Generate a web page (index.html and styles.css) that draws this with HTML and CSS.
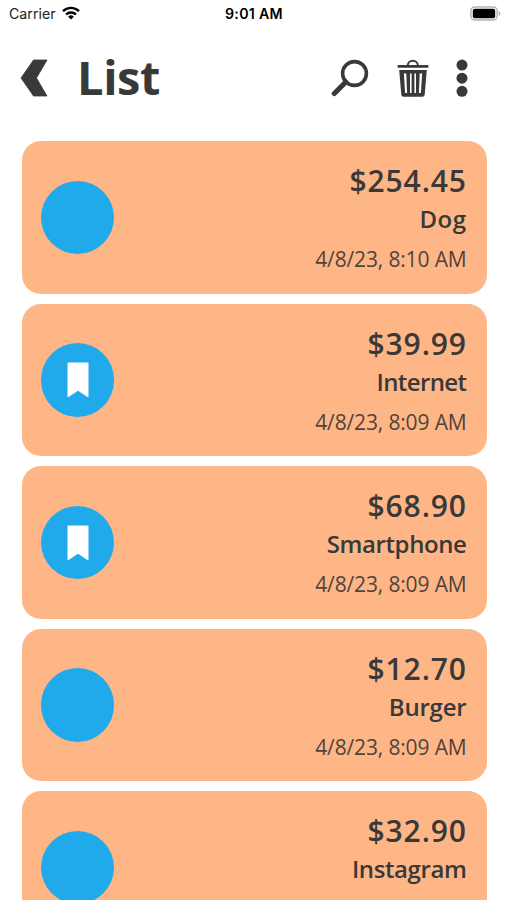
FILE: index.html
```
<!DOCTYPE html>
<html lang="en">
<head>
<meta charset="utf-8">
<meta name="viewport" content="width=device-width, initial-scale=1">
<title>List</title>
<link rel="stylesheet" href="styles.css">
</head>
<body>
<div class="status">
  <div class="carrier"><span>Carrier</span>
    <svg class="wifi" viewBox="0 0 18 14"><g fill="none" stroke="#000" stroke-width="2.4"><path d="M1 5.1a11.6 11.6 0 0 1 16 0"/><path d="M4 8.5a7.2 7.2 0 0 1 10 0"/></g><path d="M9 13.6 6.1 10.7a4.1 4.1 0 0 1 5.8 0z"/></svg>
  </div>
  <time class="clock">9:01 AM</time>
  <svg class="battery" viewBox="0 0 31 15"><rect x=".9" y=".9" width="26.2" height="13.2" rx="4" fill="#fff" stroke="#b5b5b5" stroke-width="1.5"/><rect x="2.8" y="2.8" width="22.4" height="9.4" rx="2"/><path d="M28.7 5.2c2.2.7 2.2 3.9 0 4.6z" fill="#aaa"/></svg>
</div>
<header class="bar">
  <svg class="back" viewBox="0 0 28 38"><path d="M13.5 1H27L16.5 19 27 37H13.5L1 19z" stroke="#393939" stroke-width=".8" stroke-linejoin="round"/></svg>
  <h1 class="title">List</h1>
  <svg class="search" viewBox="0 0 38 38"><circle cx="23.5" cy="14.5" r="11.9" fill="none" stroke="#393939" stroke-width="3.6"/><path d="M14.8 23 3.3 34.5" stroke="#393939" stroke-width="5.2" stroke-linecap="round"/></svg>
  <svg class="trash" viewBox="0 0 32 38"><path d="M10.7 6.8a5.1 5.1 0 0 1 10.2 0" fill="none" stroke="#393939" stroke-width="2"/><rect x=".5" y="6" width="31" height="2.8" rx="1"/><path fill-rule="evenodd" d="M2.2 11H29.8L27.7 35.7Q27.5 37.7 25.5 37.7H6.5Q4.5 37.7 4.3 35.7zM6.9 14.5 8.1 34h2L9.3 14.5zM13 14.5V34h1.6V14.5zM17.4 14.5V34H19V14.5zM22.7 14.5 21.9 34h2L25.1 14.5z"/></svg>
  <svg class="more" viewBox="0 0 12 38"><circle cx="6" cy="6.1" r="5.5"/><circle cx="6" cy="19.2" r="5.5"/><circle cx="6" cy="32.3" r="5.5"/></svg>
</header>
<main class="list">
  <article class="card">
    <div class="avatar"></div>
    <div class="info"><div class="price">$254.45</div><div class="name dog">Dog</div><time class="date">4/8/23, 8:10 AM</time></div>
  </article>
  <article class="card">
    <div class="avatar"><svg class="mark" viewBox="0 0 22 36"><path d="M1.5.5h19a1 1 0 0 1 1 1v33a.7.7 0 0 1-1 .5L11 28.8 1.5 35a.7.7 0 0 1-1-.5v-33a1 1 0 0 1 1-1z"/></svg></div>
    <div class="info"><div class="price">$39.99</div><div class="name internet">Internet</div><time class="date">4/8/23, 8:09 AM</time></div>
  </article>
  <article class="card">
    <div class="avatar"><svg class="mark" viewBox="0 0 22 36"><path d="M1.5.5h19a1 1 0 0 1 1 1v33a.7.7 0 0 1-1 .5L11 28.8 1.5 35a.7.7 0 0 1-1-.5v-33a1 1 0 0 1 1-1z"/></svg></div>
    <div class="info"><div class="price">$68.90</div><div class="name">Smartphone</div><time class="date">4/8/23, 8:09 AM</time></div>
  </article>
  <article class="card">
    <div class="avatar"></div>
    <div class="info"><div class="price">$12.70</div><div class="name burger">Burger</div><time class="date">4/8/23, 8:09 AM</time></div>
  </article>
  <article class="card">
    <div class="avatar"></div>
    <div class="info"><div class="price">$32.90</div><div class="name">Instagram</div></div>
  </article>
</main>
</body>
</html>
```
FILE: styles.css
```
* { box-sizing: border-box; }
html, body { height: 100%; }
body {
  margin: 0;
  overflow: hidden;
  background: #fff;
  color: #393939;
  font-family: "Open Sans", "Noto Sans", sans-serif;
}
svg { display: block; flex: none; fill: #393939; }
.status {
  display: grid;
  grid-template-columns: 1fr auto 1fr;
  align-items: center;
  height: 27px;
  padding: 0 6px 0 7px;
  font: 400 14.2px/27px Inter, sans-serif;
  color: #222;
}
.carrier { display: flex; align-items: center; gap: 6px; padding-left: 2px; }
.wifi { width: 18px; height: 14px; fill: #000; margin-top: -1px; }
.clock { font-weight: 600; color: #000; letter-spacing: .3px; }
.battery { width: 31px; height: 15px; justify-self: end; fill: #000; }
.bar {
  display: flex;
  align-items: center;
  height: 102px;
  padding-left: 20px;
}
.back { width: 28px; height: 38px; }
.title {
  flex: 1;
  margin: -3px 0 0 29px;
  font-size: 47px;
  line-height: 60px;
  font-weight: 700;
  letter-spacing: -.4px;
}
.search { width: 38px; height: 38px; }
.trash { width: 32px; height: 38px; margin-left: 28px; }
.more { width: 12px; height: 38px; margin: 0 39px 0 27.5px; }
.list {
  display: flex;
  flex-direction: column;
  gap: 10px;
  padding: 12px 20.5px 0 21.5px;
}
.card {
  display: flex;
  flex: none;
  justify-content: space-between;
  align-items: flex-start;
  height: 152.5px;
  padding: 0 20px 0 19px;
  border-radius: 19px;
  background: #ffb686;
}
.avatar {
  display: grid;
  place-items: center;
  width: 73.5px;
  height: 73.5px;
  margin-top: 39.5px;
  border-radius: 50%;
  background: #21aaeb;
}
.mark { width: 22px; height: 36px; fill: #fff; margin: 1px 0 0 1px; }
.info { padding-top: 20px; text-align: right; white-space: nowrap; }
.price { font-size: 30px; line-height: 40px; font-weight: 600; letter-spacing: .9px; margin-right: -.4px; }
.name { font-size: 24px; line-height: 35px; font-weight: 600; letter-spacing: -.4px; }
.dog { letter-spacing: .5px; }
.internet { letter-spacing: -.6px; }
.burger { letter-spacing: -.2px; }
.date { display: block; font-size: 21px; line-height: 47px; font-weight: 400; letter-spacing: -.15px; color: #4f443d; }
```
